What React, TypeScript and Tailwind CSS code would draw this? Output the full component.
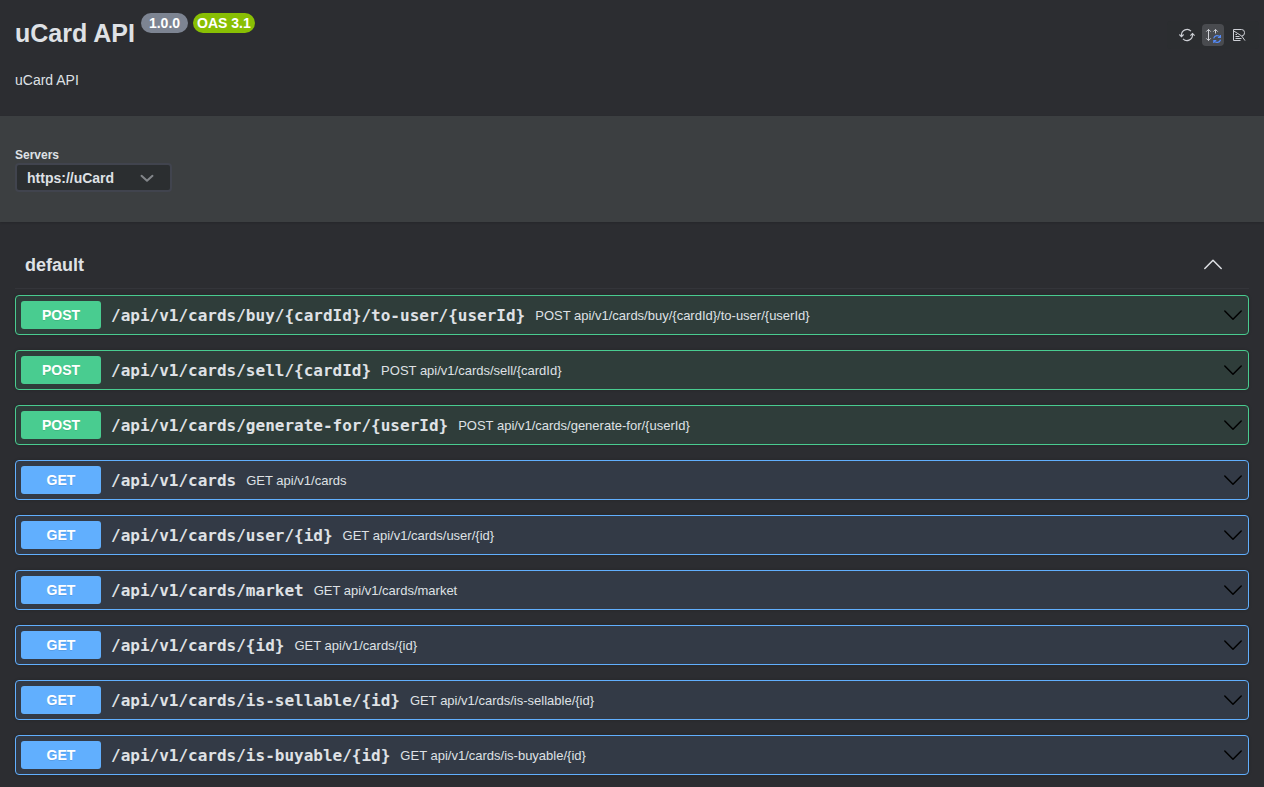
import React, { useState } from 'react';

type Method = 'POST' | 'GET';

const operations: { method: Method; path: string }[] = [
  { method: 'POST', path: 'api/v1/cards/buy/{cardId}/to-user/{userId}' },
  { method: 'POST', path: 'api/v1/cards/sell/{cardId}' },
  { method: 'POST', path: 'api/v1/cards/generate-for/{userId}' },
  { method: 'GET', path: 'api/v1/cards' },
  { method: 'GET', path: 'api/v1/cards/user/{id}' },
  { method: 'GET', path: 'api/v1/cards/market' },
  { method: 'GET', path: 'api/v1/cards/{id}' },
  { method: 'GET', path: 'api/v1/cards/is-sellable/{id}' },
  { method: 'GET', path: 'api/v1/cards/is-buyable/{id}' },
];

const rowStyle: Record<Method, string> = {
  POST: 'border-[#49cc90] bg-[#2f3d3a]',
  GET: 'border-[#61affe] bg-[#333a46]',
};

const badgeStyle: Record<Method, string> = {
  POST: 'bg-[#49cc90]',
  GET: 'bg-[#61affe]',
};

function Chevron({ up = false }: { up?: boolean }) {
  return (
    <svg width="20" height="20" viewBox="0 0 20 20" fill="none" stroke="currentColor" strokeWidth="1.5" strokeLinecap="round" strokeLinejoin="round" aria-hidden="true">
      <path d={up ? 'M1.8 13.5 10 5.3 18.2 13.5' : 'M1.8 6 10 14.2 18.2 6'} />
    </svg>
  );
}

function RefreshIcon() {
  return (
    <svg width="16" height="16" viewBox="0 0 16 16" fill="none" stroke="#ced0d6" strokeWidth="1.1" aria-hidden="true">
      <path d="M2.5 9.5V8A5.5 5.5 0 0 1 12 4.2M13.5 6.5V8A5.5 5.5 0 0 1 4 11.8" />
      <path d="M.4 7.5 2.5 9.7 4.6 7.5M11.4 8.7l2.1-2.2 2.1 2.2" />
    </svg>
  );
}

function SyncIcon() {
  return (
    <svg width="16" height="16" viewBox="0 0 16 16" fill="none" aria-hidden="true">
      <path d="M3.5 2.5v11M1.3 4.6l2.2-2.2 2.2 2.2M1.3 11.4l2.2 2.2 2.2-2.2M10.5 6.5v-4M8.3 4.6l2.2-2.2 2.2 2.2" stroke="#ced0d6" />
      <path d="M8.7 11.3a3.5 3.5 0 0 1 6.4-1M15.5 12.7a3.5 3.5 0 0 1-6.4 1M15.4 8v2.5h-2.5M8.8 16v-2.5h2.5" stroke="#548af7" strokeWidth="1.2" />
    </svg>
  );
}

function DocumentIcon() {
  return (
    <svg width="16" height="16" viewBox="0 0 16 16" fill="none" stroke="#ced0d6" aria-hidden="true">
      <path d="M9.5 13.5h-7v-11h8a3 3 0 0 1 3 3v.5a3 3 0 0 1-2.8 3L14 13.6M2.8 4l7.9 5M4.5 7.5H6M4.5 9.5H8.5M4.5 11.5h6" />
    </svg>
  );
}

export default function App() {
  const [open, setOpen] = useState(true);
  return (
    <div className="min-h-screen bg-[#2c2d31] font-['Liberation_Sans',Arial,sans-serif] text-[#dfe1e5]">
      <header className="flex items-start justify-between px-[15px] pt-3 pb-[26px]">
        <div>
          <div className="flex items-start">
            <h1 className="pt-[6px] text-[25px] leading-[30px] font-bold">uCard API</h1>
            <div className="ml-[6px] flex gap-[5px] pt-px text-sm leading-5 font-bold text-white">
              <span className="rounded-full bg-[#7d8492] px-2">1.0.0</span>
              <span className="rounded-full bg-[#89bf04] px-1">OAS 3.1</span>
            </div>
          </div>
          <p className="mt-[22px] text-sm leading-5">uCard API</p>
        </div>
        <div className="-mr-[10px] mt-[9px] flex items-center gap-1 rounded bg-[#2b2d30] px-[9px] py-[3px]">
          <button aria-label="Reload page" className="flex size-[22px] items-center justify-center rounded-[4px]"><RefreshIcon /></button>
          <button aria-label="Reload on change" aria-pressed="true" className="flex size-[22px] items-center justify-center rounded-[4px] bg-[#494b4f]"><SyncIcon /></button>
          <button aria-label="Open document" className="flex size-[22px] items-center justify-center rounded-[4px]"><DocumentIcon /></button>
        </div>
      </header>

      <section className="bg-[#3c3f41] px-[15px] pt-[31px] pb-[30px] shadow-[0_1px_2px_0_rgba(0,0,0,0.15)]">
        <label htmlFor="servers" className="block text-xs leading-4 font-bold">Servers</label>
        <div className="grid w-fit items-center">
          <select id="servers" className="col-start-1 row-start-1 h-[29px] w-[157px] appearance-none rounded-[4px] border-2 border-[#41444e] bg-[#2b2e30] pl-[10px] text-sm font-bold">
            <option>https://uCard</option>
          </select>
          <svg className="pointer-events-none col-start-1 row-start-1 mr-[18px] justify-self-end" width="14" height="14" viewBox="0 0 14 14" fill="none" stroke="#83868a" strokeWidth="2" strokeLinecap="round" strokeLinejoin="round" aria-hidden="true">
            <path d="m1.5 4.8 5.5 5 5.5-5" />
          </svg>
        </div>
      </section>

      <main className="px-[15px] pt-5 pb-3">
        <h2 className="border-b border-[#34353a] text-lg leading-6 font-bold">
          <button aria-expanded={open} onClick={() => setOpen(!open)} className="flex w-full items-center justify-between py-[11px] pr-[26px] pl-[10px] text-left">
            default
            <Chevron up={open} />
          </button>
        </h2>
        {open && (
          <ul className="mt-[6px] flex flex-col gap-[15px]">
            {operations.map(({ method, path }) => (
              <li key={path} className={`rounded-[4px] border shadow-[0_0_3px_rgba(0,0,0,0.19)] ${rowStyle[method]}`}>
                <button aria-expanded="false" className="flex w-full items-center p-[5px] text-left">
                  <span className={`w-20 shrink-0 rounded-[3px] text-center text-sm leading-7 font-bold text-white [text-shadow:0_1px_0_rgba(0,0,0,0.1)] ${badgeStyle[method]}`}>{method}</span>
                  <span className="px-[10px] pt-[2px] font-['DejaVu_Sans_Mono',monospace] text-base leading-5 font-bold">/{path}</span>
                  <span className="flex-1 pt-[2px] text-[13px] leading-5">{method} {path}</span>
                  <span className="text-black"><Chevron /></span>
                </button>
              </li>
            ))}
          </ul>
        )}
      </main>
    </div>
  );
}
